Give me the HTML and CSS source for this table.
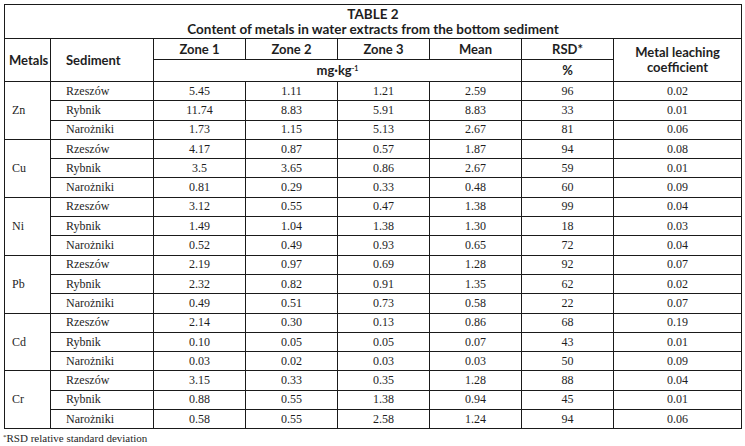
FILE: index.html
```html
<!DOCTYPE html>
<html lang="en">
<head>
<meta charset="utf-8">
<title>Table 2</title>
<link rel="stylesheet" href="styles.css">
</head>
<body>
<div class="page">
<table class="data">
  <colgroup>
    <col class="c-metal"><col class="c-sed"><col class="c-num"><col class="c-num"><col class="c-num"><col class="c-num"><col class="c-num"><col class="c-coef">
  </colgroup>
  <thead>
    <tr class="title-row"><th colspan="8" class="title">TABLE 2<br>Content of metals in water extracts from the bottom sediment</th></tr>
    <tr class="h1">
      <th rowspan="2" class="left">Metals</th>
      <th rowspan="2" class="left sed">Sediment</th>
      <th>Zone 1</th><th>Zone 2</th><th>Zone 3</th><th>Mean</th><th>RSD*</th>
      <th rowspan="2" class="coef">Metal leaching<br>coefficient</th>
    </tr>
    <tr class="h2">
      <th colspan="4">mg·kg<sup>-1</sup></th>
      <th>%</th>
    </tr>
  </thead>
  <tbody>
    <tr><td rowspan="3" class="metal">Zn</td><td class="sed">Rzeszów</td><td>5.45</td><td>1.11</td><td>1.21</td><td>2.59</td><td>96</td><td>0.02</td></tr>
    <tr><td class="sed">Rybnik</td><td>11.74</td><td>8.83</td><td>5.91</td><td>8.83</td><td>33</td><td>0.01</td></tr>
    <tr><td class="sed">Narożniki</td><td>1.73</td><td>1.15</td><td>5.13</td><td>2.67</td><td>81</td><td>0.06</td></tr>

    <tr><td rowspan="3" class="metal">Cu</td><td class="sed">Rzeszów</td><td>4.17</td><td>0.87</td><td>0.57</td><td>1.87</td><td>94</td><td>0.08</td></tr>
    <tr><td class="sed">Rybnik</td><td>3.5</td><td>3.65</td><td>0.86</td><td>2.67</td><td>59</td><td>0.01</td></tr>
    <tr><td class="sed">Narożniki</td><td>0.81</td><td>0.29</td><td>0.33</td><td>0.48</td><td>60</td><td>0.09</td></tr>

    <tr><td rowspan="3" class="metal">Ni</td><td class="sed">Rzeszów</td><td>3.12</td><td>0.55</td><td>0.47</td><td>1.38</td><td>99</td><td>0.04</td></tr>
    <tr><td class="sed">Rybnik</td><td>1.49</td><td>1.04</td><td>1.38</td><td>1.30</td><td>18</td><td>0.03</td></tr>
    <tr><td class="sed">Narożniki</td><td>0.52</td><td>0.49</td><td>0.93</td><td>0.65</td><td>72</td><td>0.04</td></tr>

    <tr><td rowspan="3" class="metal">Pb</td><td class="sed">Rzeszów</td><td>2.19</td><td>0.97</td><td>0.69</td><td>1.28</td><td>92</td><td>0.07</td></tr>
    <tr><td class="sed">Rybnik</td><td>2.32</td><td>0.82</td><td>0.91</td><td>1.35</td><td>62</td><td>0.02</td></tr>
    <tr><td class="sed">Narożniki</td><td>0.49</td><td>0.51</td><td>0.73</td><td>0.58</td><td>22</td><td>0.07</td></tr>

    <tr><td rowspan="3" class="metal">Cd</td><td class="sed">Rzeszów</td><td>2.14</td><td>0.30</td><td>0.13</td><td>0.86</td><td>68</td><td>0.19</td></tr>
    <tr><td class="sed">Rybnik</td><td>0.10</td><td>0.05</td><td>0.05</td><td>0.07</td><td>43</td><td>0.01</td></tr>
    <tr><td class="sed">Narożniki</td><td>0.03</td><td>0.02</td><td>0.03</td><td>0.03</td><td>50</td><td>0.09</td></tr>

    <tr><td rowspan="3" class="metal">Cr</td><td class="sed">Rzeszów</td><td>3.15</td><td>0.33</td><td>0.35</td><td>1.28</td><td>88</td><td>0.04</td></tr>
    <tr><td class="sed">Rybnik</td><td>0.88</td><td>0.55</td><td>1.38</td><td>0.94</td><td>45</td><td>0.01</td></tr>
    <tr><td class="sed">Narożniki</td><td>0.58</td><td>0.55</td><td>2.58</td><td>1.24</td><td>94</td><td>0.06</td></tr>
  </tbody>
</table>
<p class="note"><sup>*</sup>RSD relative standard deviation</p>
</div>
</body>
</html>
```

FILE: styles.css
```css
html, body {
  margin: 0;
  padding: 0;
  background: #ffffff;
}
.page {
  padding: 4px 0 0 4px;
}
.data {
  border-collapse: collapse;
  table-layout: fixed;
  width: 737px;
  color: #1e1e1e;
}
.c-metal { width: 46px; }
.c-sed { width: 103px; }
.c-num { width: 92px; }
.c-coef { width: 128px; }

.data th, .data td {
  border: 1px solid #1a1a1a;
  padding: 0;
}
.data th {
  font-family: Lato, "Open Sans", sans-serif;
  font-weight: bold;
  font-size: 13px;
  text-align: center;
  line-height: 15px;
}
.title-row { height: 34px; }
.data th.title {
  font-size: 13.5px;
  line-height: 15px;
  padding-top: 0;
}
.h1 { height: 21px; }
.h2 { height: 22px; }
.data th.left { text-align: left; padding-left: 4px; }
.data th.sed { padding-left: 15px; }
.data th sup { font-size: 7px; vertical-align: 4px; line-height: 0; }

.data td {
  font-family: "Liberation Serif", "Times New Roman", serif;
  font-size: 12px;
  text-align: center;
  line-height: 13px;
}
.data tbody tr { height: 19.3px; }
.data td.metal { text-align: left; padding-left: 7px; }
.data td.sed {
  text-align: left;
  padding-left: 15px;
  font-family: "Liberation Serif", "Times New Roman", serif;
}

.note {
  margin: 3px 0 0 0;
  margin-left: -1px;
  font-family: "Liberation Serif", "Times New Roman", serif;
  font-size: 11px;
  color: #1e1e1e;
}
.note sup { font-size: 7px; vertical-align: 3px; line-height: 0; }
```
